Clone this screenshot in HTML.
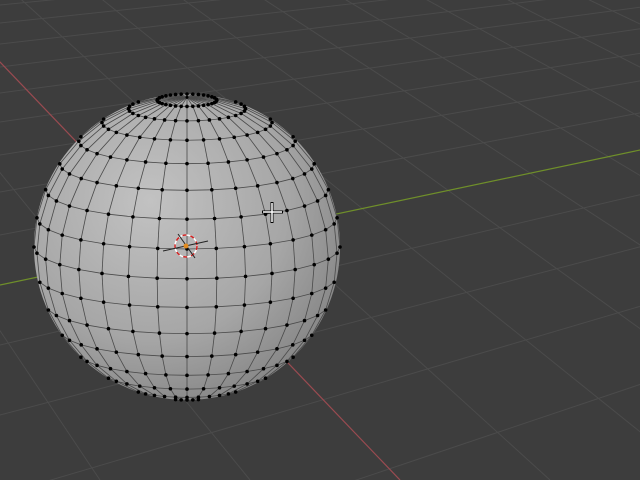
<!DOCTYPE html>
<html><head><meta charset="utf-8"><style>
html,body{margin:0;padding:0;background:#3d3d3d;overflow:hidden;width:640px;height:480px}
svg{display:block}
</style></head><body>
<svg id="s" width="640" height="480" viewBox="0 0 640 480" xmlns="http://www.w3.org/2000/svg">
<defs>
<radialGradient id="g" cx="0.38" cy="0.35" r="0.75">
<stop offset="0" stop-color="#c2c2c2"/>
<stop offset="0.6" stop-color="#a6a6a6"/>
<stop offset="1" stop-color="#808080"/>
</radialGradient>
<clipPath id="c"><rect width="640" height="480"/></clipPath>
</defs>
<g clip-path="url(#c)">
<rect width="640" height="480" fill="#3d3d3d"/>
<g id="grid" stroke="#4b4b4b" stroke-width="1"></g>
<line x1="-600" y1="-565" x2="400" y2="480" stroke="#9a4a50" stroke-width="1.2"/>
<line x1="0" y1="285" x2="640" y2="150" stroke="#6f8f2a" stroke-width="1.2"/>
<circle cx="187" cy="247" r="153" fill="url(#g)"/>
<g id="wire" stroke="#4a4a4a" stroke-width="0.8" fill="none"></g>
<g id="dots" fill="#000"></g>
<g>
<circle cx="186" cy="246" r="11" fill="none" stroke="#fff" stroke-width="1.5"/>
<circle cx="186" cy="246" r="11" fill="none" stroke="#d02020" stroke-width="1.5" stroke-dasharray="4 4"/>
<line x1="163" y1="251" x2="208" y2="241" stroke="#222" stroke-width="1"/>
<line x1="178" y1="234" x2="195" y2="258" stroke="#222" stroke-width="1"/>
<circle cx="186" cy="246" r="2.5" fill="#e08a20"/>
</g>
<g stroke="#000" stroke-width="3"><line x1="262" y1="212" x2="283" y2="212"/><line x1="272" y1="202" x2="272" y2="223"/></g>
<g stroke="#fff" stroke-width="1.5"><line x1="263" y1="212" x2="282" y2="212"/><line x1="272" y1="203" x2="272" y2="222"/></g>
</g>
</svg>
<script>
var NS="http://www.w3.org/2000/svg";
function el(p,t,a){var e=document.createElementNS(NS,t);for(var k in a)e.setAttribute(k,a[k]);p.appendChild(e);return e;}
var grid=document.getElementById('grid');
var A=[-600,-565];
for(var k=-6;k<=10;k++){var x=400+150*k;el(grid,'line',{x1:A[0],y1:A[1],x2:x,y2:480});}
var B=[2500,-242];
var ys=[-60,-20,5,23,44,67,93,122,155,192,235,345,415,495,600];
ys.forEach(function(y){var dx=B[0],dy=B[1]-y;var x2=-10,y2=y+dy/dx*(-10);el(grid,'line',{x1:B[0],y1:B[1],x2:x2,y2:y2});});
var cx=187,cy=247,R=153,t=12*Math.PI/180,ct=Math.cos(t),st=Math.sin(t);
function P(phi,lam){var x=Math.cos(phi)*Math.sin(lam),y=Math.sin(phi),z=Math.cos(phi)*Math.cos(lam);
return {x:cx+R*x,y:cy-R*(y*ct-z*st),d:z*ct+y*st};}
var wire=document.getElementById('wire'),dots=document.getElementById('dots');
var NR=16,NS2=32;
for(var i=1;i<NR;i++){var phi=Math.PI/2-i*Math.PI/NR;
 for(var j=0;j<NS2;j++){var l1=j*2*Math.PI/NS2,l2=(j+1)*2*Math.PI/NS2;
  var a=P(phi,l1),b=P(phi,l2);
  if(a.d>-0.02&&b.d>-0.02)el(wire,'line',{x1:a.x,y1:a.y,x2:b.x,y2:b.y});
  var p0=Math.PI/2-(i-1)*Math.PI/NR,c=P(p0,l1);
  if(a.d>-0.02&&c.d>-0.02)el(wire,'line',{x1:a.x,y1:a.y,x2:c.x,y2:c.y});
  if(i==NR-1){var e2=P(-Math.PI/2,l1);if(a.d>-0.02&&e2.d>-0.02)el(wire,'line',{x1:a.x,y1:a.y,x2:e2.x,y2:e2.y});}
  if(a.d>-0.03)el(dots,'circle',{cx:a.x,cy:a.y,r:1.8});
 }}
var np=P(Math.PI/2,0);el(dots,'circle',{cx:np.x,cy:np.y,r:1.5});
</script>
</body></html>
